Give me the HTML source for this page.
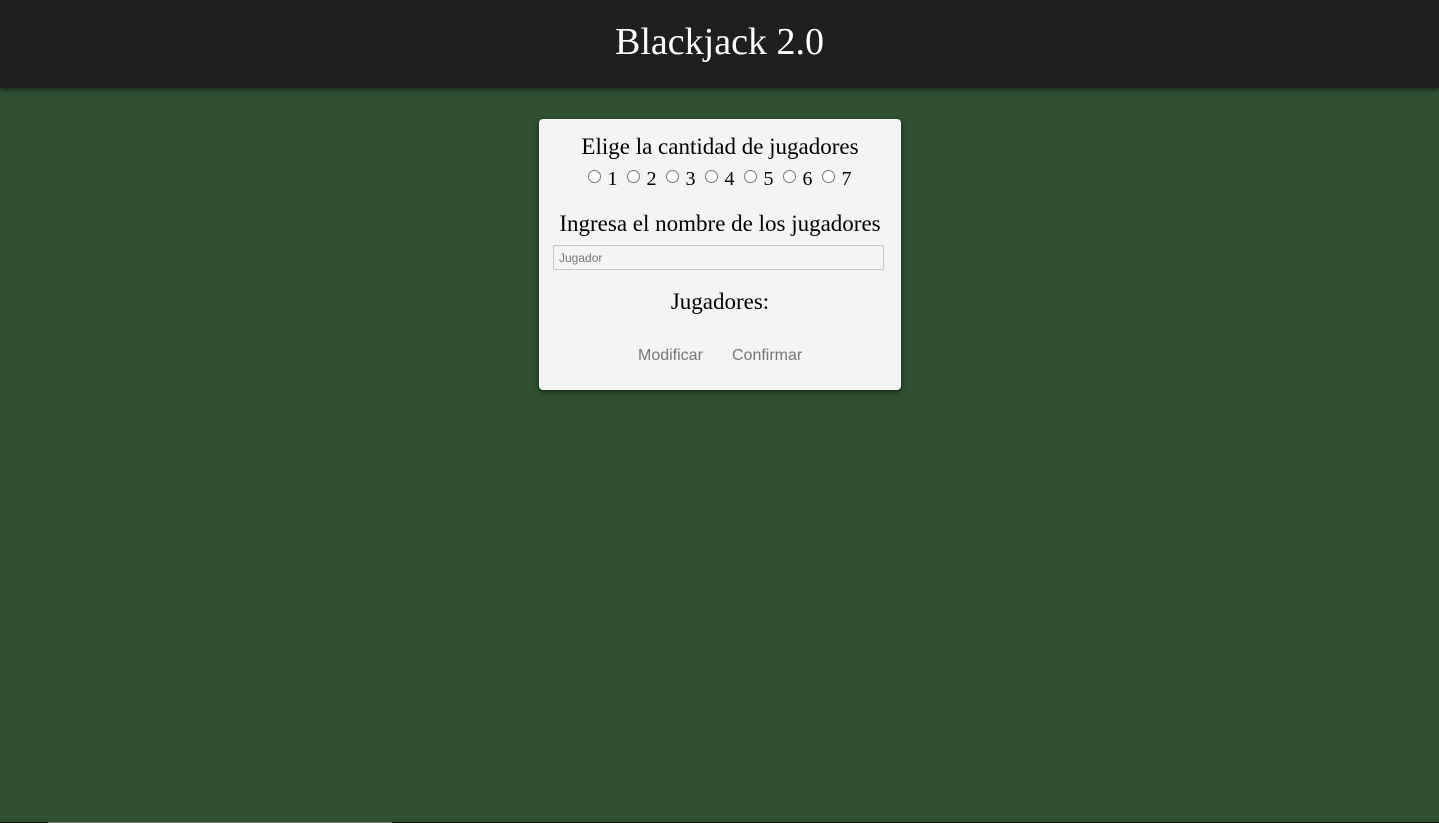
<!DOCTYPE html>
<html><head><meta charset="utf-8"><style>
html,body{margin:0;padding:0;width:1439px;height:823px;overflow:hidden;background:#2f5031;font-family:"Liberation Sans",sans-serif}
header{height:88px;background:#1f1f1f;box-shadow:0 2px 5px rgba(0,0,0,.5);color:#fff;text-align:center;font-family:"Liberation Serif",serif;font-size:38px;line-height:84px;position:relative}
.card{position:absolute;left:539px;top:119px;width:362px;height:271px;background:#f4f4f4;border-radius:4px;box-shadow:0 2px 6px rgba(0,0,0,.5);text-align:center;font-family:"Liberation Serif",serif;color:#000}
.h{font-size:23px;position:absolute;left:0;right:0}
.r{position:absolute;top:49px;left:0;right:10px;font-size:20px}
.rb{display:inline-block;width:11px;height:11px;border:1px solid #777;border-radius:50%;background:#fff;margin:0 7px 0 9px;vertical-align:2px}
.in{position:absolute;left:14px;top:126px;width:324px;height:23px;border:1px solid #c8c8c8;border-radius:2px;background:#f4f4f4;font-family:"Liberation Sans",sans-serif;font-size:12px;color:#777;text-align:left;line-height:24px;padding-left:5px;box-sizing:content-box}
.btn{position:absolute;top:228px;font-family:"Liberation Sans",sans-serif;font-size:16px;color:#777}
.bar{position:absolute;bottom:0;height:1px}
</style></head><body>
<header>Blackjack 2.0</header>
<div class="card">
<div class="h" style="top:15px">Elige la cantidad de jugadores</div>
<div class="r"><span class="rb"></span>1<span class="rb"></span>2<span class="rb"></span>3<span class="rb"></span>4<span class="rb"></span>5<span class="rb"></span>6<span class="rb"></span>7</div>
<div class="h" style="top:92px">Ingresa el nombre de los jugadores</div>
<div class="in">Jugador</div>
<div class="h" style="top:170px">Jugadores:</div>
<div class="btn" style="left:99px">Modificar</div>
<div class="btn" style="left:193px">Confirmar</div>
</div>
<div class="bar" style="left:0;width:1439px;background:#111"></div>
<div class="bar" style="left:48px;width:344px;background:#777"></div>
</body></html>
